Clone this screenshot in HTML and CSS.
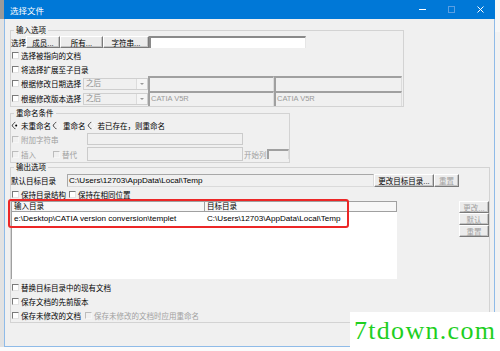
FILE: index.html
```html
<!DOCTYPE html>
<html lang="zh-CN">
<head>
  <meta charset="UTF-8">
  <title>选择文件</title>
  <link rel="stylesheet" href="styles.css">
</head>
<body>
  <div class="desk-left"></div>
  <div class="window">
    <div class="titlebar">
      <span class="title">选择文件</span>
      <div class="caption-btns">
        <svg class="cap" width="29" height="19" viewBox="0 0 29 19"><path d="M11 9.5h7" stroke="#fff" stroke-width="1"/></svg>
        <svg class="cap" width="29" height="19" viewBox="0 0 29 19"><rect x="11.5" y="6.5" width="6" height="6" fill="none" stroke="#5a9fe3" stroke-width="1"/></svg>
        <svg class="cap" width="29" height="19" viewBox="0 0 29 19"><path d="M11.5 6.5l6 6M17.5 6.5l-6 6" stroke="#fff" stroke-width="1"/></svg>
      </div>
    </div>

    <div class="client">
      <!-- input options -->
      <div class="group g-input">
        <div class="group-title">输入选项</div>
        <div class="row r-select">
          <span class="lbl-select">选择</span>
          <span class="btn b-member">成员...</span>
          <span class="btn b-all">所有...</span>
          <span class="btn b-string">字符串...</span>
          <span class="edit e-select"></span>
        </div>
        <div class="row r-check"><span class="chk"></span><span>选择被指向的文档</span></div>
        <div class="row r-check"><span class="chk"></span><span>将选择扩展至子目录</span></div>
        <div class="row r-combo">
          <span class="combo-lbl"><span class="chk"></span><span>根据修改日期选择</span></span>
          <span class="combo"><span class="combo-text">之后</span><span class="combo-arrow"></span></span>
          <span class="field f1"></span>
          <span class="field f2"></span>
        </div>
        <div class="row r-combo">
          <span class="combo-lbl"><span class="chk"></span><span>根据修改版本选择</span></span>
          <span class="combo"><span class="combo-text">之后</span><span class="combo-arrow"></span></span>
          <span class="field f1">CATIA V5R</span>
          <span class="field f2">CATIA V5R</span>
        </div>
      </div>

      <!-- rename -->
      <div class="group g-rename">
        <div class="group-title">重命名条件</div>
        <div class="row r-radio">
          <span class="radio-item"><span class="radio on"></span><span>未重命名</span></span>
          <span class="radio-item"><span class="radio"></span><span>重命名</span></span>
          <span class="radio-item"><span class="radio"></span><span>若已存在，则重命名</span></span>
        </div>
        <div class="row r-append">
          <span class="opt-block w-append"><span class="chk off"></span><span class="dim">附加字符串</span></span>
          <span class="flat-field w-156"></span>
        </div>
        <div class="row r-insert">
          <span class="opt-block w-insert"><span class="chk off"></span><span class="dim">插入</span></span>
          <span class="opt-block w-replace"><span class="chk off"></span><span class="dim">替代</span></span>
          <span class="flat-field w-156 tall"></span>
          <span class="start-lbl dim">开始列</span>
          <span class="field small"></span>
        </div>
      </div>

      <!-- output -->
      <div class="group g-output">
        <div class="group-title">输出选项</div>
        <div class="row r-target">
          <span class="target-lbl">默认目标目录</span>
          <span class="target-field path">C:\Users\12703\AppData\Local\Temp</span>
          <span class="btn b-change">更改目标目录...</span>
          <span class="btn b-reset dim">重置</span>
        </div>
        <div class="row r-check">
          <span class="opt-block w-keep"><span class="chk"></span><span>保持目录结构</span></span>
          <span class="chk"></span><span>保持在相同位置</span>
        </div>
        <div class="list-block">
          <div class="list">
            <div class="list-head">
              <span class="col c1">输入目录</span>
              <span class="col c2">目标目录</span>
            </div>
            <div class="list-row">
              <span class="col c1 path">e:\Desktop\CATIA version conversion\templet</span>
              <span class="col c2 path">C:\Users\12703\AppData\Local\Temp</span>
            </div>
          </div>
          <div class="side-btns">
            <span class="btn dim">更改...</span>
            <span class="btn dim">默认</span>
            <span class="btn dim">重置</span>
          </div>
        </div>
        <div class="row r-check first"><span class="chk"></span><span>替换目标目录中的现有文档</span></div>
        <div class="row r-check"><span class="chk"></span><span>保存文档的先前版本</span></div>
        <div class="row r-check">
          <span class="opt-block w-unmod"><span class="chk"></span><span>保存未修改的文档</span></span>
          <span class="chk off"></span><span class="dim">保存未修改的文档时应用重命名</span>
        </div>
      </div>
    </div>
  </div>
  <div class="desk-right"></div>

  <div class="mark-box"></div>
  <div class="watermark">7tdown.com</div>
</body>
</html>
```

FILE: styles.css
```css
* { box-sizing: border-box; }
body { margin: 0; width: 500px; height: 351px; overflow: hidden; display: flex; align-items: flex-start; position: relative; background: #fbfbfb; font-family: "Liberation Sans", "Noto Sans CJK SC", sans-serif; font-size: 7.5px; color: #000; }

.desk-left { width: 4px; height: 347px; background: #e2e2e2; border-top: 19px solid #9a9a9a; }
.desk-right { flex: 1; height: 347px; background: #f2f2f2; border-top: 32px solid #f7f7f7; }

.window { width: 491px; height: 347px; display: flex; flex-direction: column; background: #f0f0f0; }
.titlebar { height: 19px; background: #0078d7; color: #fff; display: flex; align-items: center; flex-shrink: 0; }
.title { font-size: 8.5px; margin-left: 6px; }
.caption-btns { margin-left: auto; display: flex; }
.cap { display: block; }
.client { flex: 1; border: 1px solid #8fbbe8; border-top: 0; padding-left: 5px; }

.group { border: 1px solid #d3d3d3; }
.group-title { width: max-content; height: 9px; line-height: 9px; margin: -5px 0 0 3px; padding: 0 2px; background: #f0f0f0; }
.g-input { width: 394px; margin-top: 11px; }
.g-rename { width: 280px; margin-top: 6px; }
.g-output { width: 480px; margin-top: 4px; }

.row { display: flex; align-items: center; white-space: nowrap; }
.dim { color: #a0a0a0; }
.path { font-size: 8.1px; }

/* controls */
.chk { width: 7px; height: 7px; margin: 0 2px 0 1px; flex-shrink: 0; background: #fff; border: 1px solid; border-color: #7a7a7a #e2e2e2 #e2e2e2 #7a7a7a; }
.chk.off { background: #f0f0f0; border-color: #bcbcbc #f6f6f6 #f6f6f6 #bcbcbc; }
.radio { width: 7px; height: 7px; margin: 0 3px 0 1px; border-radius: 50%; border: 1px solid; border-color: #6a6a6a #f8f8f8 #f8f8f8 #6a6a6a; transform: rotate(-45deg); background: #f0f0f0; position: relative; flex-shrink: 0; }
.radio.on::after { content: ""; position: absolute; left: 1.5px; top: 1.5px; width: 2px; height: 2px; border-radius: 50%; background: #000; }
.btn { display: flex; align-items: center; justify-content: center; height: 12px; background: #ececec; border: 1px solid; border-color: #fff #7a7a7a #7a7a7a #fff; box-shadow: inset -1px -1px #c4c4c4; }
.edit { height: 12px; background: #fff; border-top: 2px solid #8a8a8a; border-left: 2px solid #8a8a8a; border-right: 1px solid #e6e6e6; }

/* input options */
.r-select { margin-top: 1px; height: 12px; }
.lbl-select { width: 15px; }
.b-member { width: 34px; }
.b-all { width: 43px; }
.b-string { width: 46px; }
.e-select { width: 157px; }
.r-check { height: 14px; }
.r-combo { height: 15px; }
.combo-lbl { display: flex; align-items: center; width: 72px; }
.combo { display: flex; width: 65px; height: 12px; border: 1px solid #cfcfcf; background: #f0f0f0; }
.combo-text { flex: 1; padding-left: 2px; line-height: 10px; color: #8c8c8c; }
.combo-arrow { width: 11px; border-left: 1px solid #dcdcdc; background: #f5f5f5; position: relative; }
.combo-arrow::after { content: ""; position: absolute; left: 3px; top: 4px; border: 2px solid transparent; border-top: 2px solid #9a9a9a; border-width: 2px 2px 0; }
.field { height: 15px; background: #f0f0f0; border-top: 2px solid #a0a0a0; border-left: 2px solid #a0a0a0; border-right: 1px solid #dcdcdc; color: #9a9a9a; padding-left: 1px; line-height: 12px; }
.f1 { width: 126px; }
.f2 { width: 128px; }

/* rename */
.r-radio { height: 13px; margin-top: 1px; }
.radio-item { display: flex; align-items: center; }
.radio-item:first-child .radio { margin-right: 2px; }
.radio-item:first-child { margin-right: 1px; }
.radio-item:nth-child(2) { margin-right: 1px; }
.r-append { height: 14px; }
.r-insert { height: 16px; }
.opt-block { display: flex; align-items: center; flex-shrink: 0; }
.w-append { width: 76px; }
.w-insert { width: 41px; }
.w-replace { width: 35px; }
.flat-field { height: 12px; border: 1px solid #cbcbcb; background: #f0f0f0; }
.flat-field.tall { height: 14px; }
.w-156 { width: 156px; }
.start-lbl { width: 24px; padding-left: 1px; }
.field.small { width: 22px; height: 10px; }

/* output */
.r-target { height: 14px; margin-top: 1px; }
.target-lbl { width: 56px; }
.target-field { width: 307px; height: 13px; line-height: 11px; padding-left: 1px; background: #f0f0f0; border: 1px solid; border-color: #a8a8a8 #dadada #dadada #a8a8a8; }
.b-change { width: 60px; height: 13px; }
.b-reset { width: 25px; height: 13px; }
.w-keep { width: 57px; }
.w-unmod { width: 73px; }

.list-block { display: flex; height: 78px; }
.list { width: 386px; background: #fff; border-left: 1px solid #a0a0a0; }
.list-head { display: flex; height: 11px; background: #f7f7f7; border-top: 1px solid #a0a0a0; border-bottom: 1px solid #a0a0a0; line-height: 9px; }
.list-row { display: flex; height: 14px; line-height: 14px; white-space: nowrap; }
.col { padding-left: 2px; }
.c1 { width: 193px; }
.list-head .c1 { border-right: 1px solid #a0a0a0; }
.c2 { flex: 1; }
.list-head .c2 { border-right: 1px solid #a0a0a0; }
.side-btns { margin-left: 62px; width: 30px; display: flex; flex-direction: column; }
.r-check.first { margin-top: 1px; }

/* overlays */
.mark-box { position: absolute; left: 8px; top: 199px; width: 341px; height: 29px; border: 2px solid #ec2727; border-radius: 3px; }
.watermark { position: absolute; left: 350px; top: 312px; width: 150px; height: 39px; background: #fff; color: #1fcf1f; font-family: "Liberation Serif", serif; font-size: 26px; letter-spacing: 1.3px; padding-left: 4px; line-height: 37px; }
```
